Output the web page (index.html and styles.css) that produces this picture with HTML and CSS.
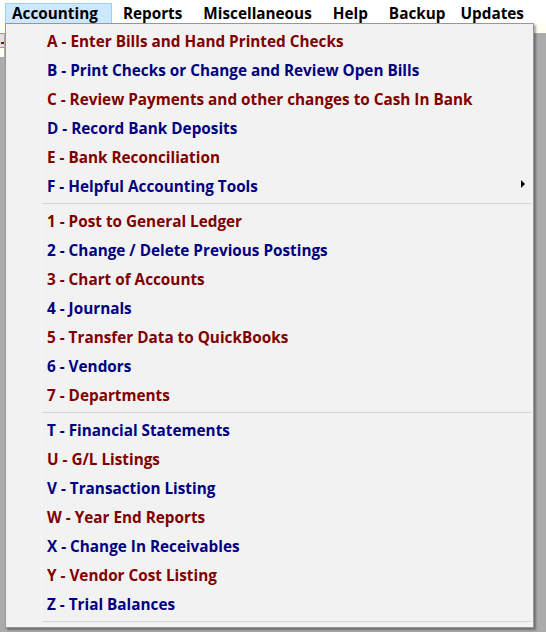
FILE: index.html
```html
<!DOCTYPE html>
<html>
<head>
<meta charset="utf-8">
<link rel="stylesheet" href="styles.css">
</head>
<body>
<div class="menubar">
  <div class="top-item active">Accounting</div>
  <div class="top-item">Reports</div>
  <div class="top-item">Miscellaneous</div>
  <div class="top-item">Help</div>
  <div class="top-item">Backup</div>
  <div class="top-item last">Updates</div>
</div>
<div class="workspace">
  <div class="strip"></div>
  <div class="field"><span class="dot"></span></div>
  <div class="strip2"></div>
</div>
<div class="dropdown">
  <div class="item red">A - Enter Bills and Hand Printed Checks</div>
  <div class="item blue">B - Print Checks or Change and Review Open Bills</div>
  <div class="item red">C - Review Payments and other changes to Cash In Bank</div>
  <div class="item blue">D - Record Bank Deposits</div>
  <div class="item red">E - Bank Reconciliation</div>
  <div class="item blue sub">F - Helpful Accounting Tools<span class="arrow"></span></div>
  <div class="sep"></div>
  <div class="item red">1 - Post to General Ledger</div>
  <div class="item blue">2 - Change / Delete Previous Postings</div>
  <div class="item red">3 - Chart of Accounts</div>
  <div class="item blue">4 - Journals</div>
  <div class="item red">5 - Transfer Data to QuickBooks</div>
  <div class="item blue">6 - Vendors</div>
  <div class="item red">7 - Departments</div>
  <div class="sep"></div>
  <div class="item blue">T - Financial Statements</div>
  <div class="item red">U - G/L Listings</div>
  <div class="item blue">V - Transaction Listing</div>
  <div class="item red">W - Year End Reports</div>
  <div class="item blue">X - Change In Receivables</div>
  <div class="item red">Y - Vendor Cost Listing</div>
  <div class="item blue">Z - Trial Balances</div>
  <div class="sep"></div>
</div>
</body>
</html>
```
FILE: styles.css
```css
html, body {
  margin: 0;
  padding: 0;
}
body {
  width: 546px;
  height: 632px;
  overflow: hidden;
  background: #ababab;
  font-family: "Open Sans", "Noto Sans", sans-serif;
  font-weight: 700;
  position: relative;
}
.menubar {
  height: 23px;
  background: #ffffff;
  display: flex;
  align-items: flex-end;
  padding-left: 5px;
  font-size: 15.3px;
  color: #000;
}
.top-item {
  height: 20px;
  line-height: 20px;
  padding: 0 10px 0 11px;
  box-sizing: border-box;
  white-space: nowrap;
}
.top-item.active {
  background: #cce8ff;
  border: 1px solid #99d1ff;
  border-bottom: none;
  padding: 0 13px 0 6px;
  line-height: 19px;
}
.top-item.last {
  padding-left: 5px;
}
.workspace {
  height: 609px;
}
.strip {
  height: 10px;
  background: #fffff0;
}
.field {
  width: 4px;
  height: 13px;
  background: #e0e0e0;
  border-top: 1px solid #9a9a9a;
  border-bottom: 1px solid #9a9a9a;
  position: relative;
}
.dot {
  display: block;
  position: absolute;
  left: 1px;
  top: 8px;
  width: 3px;
  height: 2px;
  background: #900000;
}
.strip2 {
  width: 4px;
  height: 9px;
  background: #fffff0;
}
.dropdown {
  position: absolute;
  left: 5px;
  top: 23px;
  width: 527px;
  background: #f2f2f2;
  border: 1px solid #979797;
  padding: 3px 0 2px 0;
  box-shadow: 2px 2px 2px rgba(0, 0, 0, 0.35);
  font-size: 15.3px;
}
.dropdown::before {
  content: "";
  position: absolute;
  left: 35px;
  top: 0;
  bottom: 0;
  width: 1px;
  background: #f7f7f7;
}
.item {
  height: 29px;
  line-height: 29px;
  padding-left: 41px;
  padding-right: 8px;
  display: flex;
  align-items: center;
  white-space: nowrap;
}
.red { color: #800000; }
.blue { color: #000080; }
.arrow {
  margin-left: auto;
  width: 0;
  height: 0;
  border-top: 4px solid transparent;
  border-bottom: 4px solid transparent;
  border-left: 4px solid #000;
  margin-top: -6px;
}
.sep {
  height: 6px;
  margin: 0 1px 0 36px;
  box-sizing: border-box;
  border-top: 2px solid transparent;
}
.sep::after {
  content: "";
  display: block;
  height: 1px;
  background: #d7d7d7;
}
```
